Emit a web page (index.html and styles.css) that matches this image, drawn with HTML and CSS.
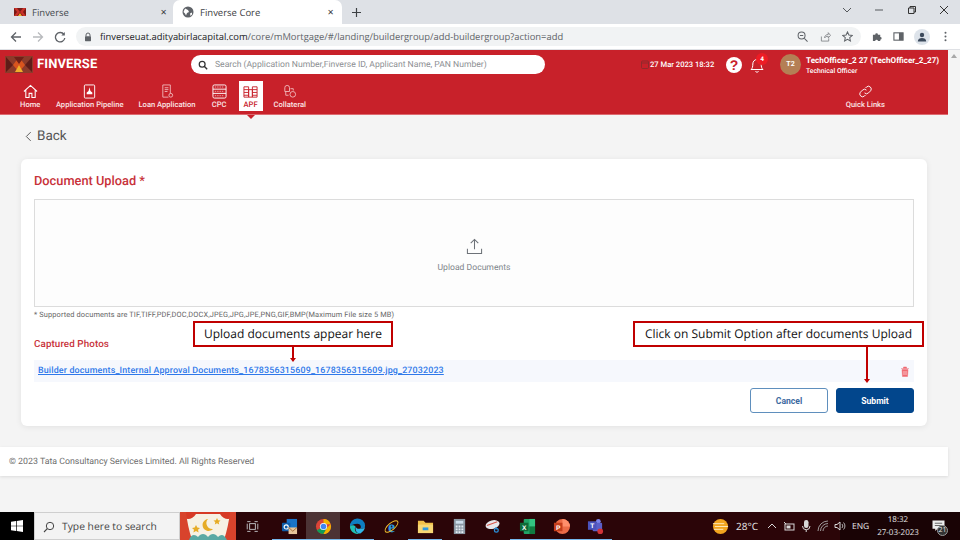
FILE: index.html
```html
<!DOCTYPE html>
<html lang="en">
<head>
  <meta charset="UTF-8" />
  <title>Finverse Core</title>
  <link rel="stylesheet" href="styles.css">
</head>
<body>
  <div class="tabstrip">
    <div class="tab">
      <svg class="tab-icon" viewBox="0 0 12 8"><rect width="12" height="8" fill="#c8322a"/><path d="M0 0l3 4-3 4zM12 0L9 4l3 4zM3 0l3 4 3-4zM3 8l3-4 3 4z" fill="#7a1a16"/><path d="M4 8l2-3 2 3z" fill="#f0b030"/></svg>
      <span class="tab-title">Finverse</span>
      <span class="tab-close">&#10005;</span>
    </div>
    <div class="tab tab-active">
      <svg class="tab-icon" viewBox="0 0 12 12"><circle cx="6" cy="6" r="5.5" fill="#5f6368"/><path d="M3 2.5l3 1.5 1 2-2 1-1 2.5-1-2-1.5-1.5zM8 7.5l2-1 0 2-1.5 1.5z" fill="#fff"/></svg>
      <span class="tab-title">Finverse Core</span>
      <span class="tab-close">&#10005;</span>
    </div>
    <svg class="new-tab" viewBox="0 0 10 10"><path d="M5 0v10M0 5h10" stroke="#3c4043" stroke-width="1.3"/></svg>
    <div class="window-btns">
      <svg viewBox="0 0 10 10"><path d="M1 3l4 4 4-4" fill="none" stroke="#55585c" stroke-width="1"/></svg>
      <svg viewBox="0 0 10 10"><path d="M1 5h8" stroke="#55585c" stroke-width="1"/></svg>
      <svg viewBox="0 0 10 10"><path d="M1.5 3h5.500v5.500h-5.500zM3 3V1.500h5.500V7H7" fill="none" stroke="#333" stroke-width="1"/></svg>
      <svg viewBox="0 0 10 10"><path d="M1 1l8 8M9 1l-8 8" stroke="#333" stroke-width="1"/></svg>
    </div>
  </div>

  <div class="toolbar">
    <svg class="nav-icon" viewBox="0 0 12 12"><path d="M11 6H2M6 1.500L1.500 6 6 10.500" fill="none" stroke="#5f6368" stroke-width="1.300"/></svg>
    <svg class="nav-icon" viewBox="0 0 12 12"><path d="M1 6h9M6 1.500L10.500 6 6 10.500" fill="none" stroke="#b8babd" stroke-width="1.300"/></svg>
    <svg class="nav-icon" viewBox="0 0 12 12"><path d="M10 3.500A4.700 4.700 0 1 0 10.800 7" fill="none" stroke="#5f6368" stroke-width="1.300"/><path d="M10.800 1v3.500H7.300z" fill="#5f6368"/></svg>
    <div class="omnibox">
      <svg class="lock" viewBox="0 0 8 10"><path d="M2 4.500V3a2 2 0 0 1 4 0v1.500" fill="none" stroke="#5f6368"/><rect x="1" y="4.200" width="6" height="5" rx=".6" fill="#5f6368"/></svg>
      <span class="url"><b>finverseuat.adityabirlacapital.com</b>/core/mMortgage/#/landing/buildergroup/add-buildergroup?action=add</span>
      <div class="omni-icons">
        <svg viewBox="0 0 12 12"><circle cx="5" cy="5" r="3.800" fill="none" stroke="#5f6368" stroke-width="1.100"/><path d="M8 8l3.500 3.500M3.200 5h3.600" stroke="#5f6368" stroke-width="1.100"/></svg>
        <svg viewBox="0 0 12 12"><path d="M1.500 6v5h8V8M5 7.500C5 5 7 3.800 9 3.800V1.800L11.500 4.800 9 7.500V5.800C7 5.800 6 6.300 5 7.500z" fill="none" stroke="#7d8084" stroke-width=".9"/></svg>
        <svg viewBox="0 0 12 12"><path d="M6 1l1.500 3.400 3.700.4-2.800 2.400.8 3.600L6 9 2.800 10.800l.8-3.600L.8 4.800l3.700-.4z" fill="none" stroke="#5f6368" stroke-width="1.100"/></svg>
      </div>
    </div>
    <div class="toolbar-icons">
      <svg viewBox="0 0 12 12"><path d="M1 4h2.500a1.500 1.500 0 0 1 3 0H9v2.500a1.500 1.500 0 0 1 0 3V11H6.500a1.500 1.500 0 0 0-3 0H1z" fill="#5f6368"/></svg>
      <svg viewBox="0 0 12 12"><rect x="1" y="2" width="10" height="8" fill="none" stroke="#5f6368" stroke-width="1.200"/><rect x="6.500" y="2" width="4.500" height="8" fill="#5f6368"/></svg>
      <span class="profile"><svg viewBox="0 0 12 12"><circle cx="6" cy="4" r="2.200" fill="#3c4a5c"/><path d="M1.800 10.500c0-2.500 2-3.500 4.200-3.500s4.200 1 4.200 3.500z" fill="#3c4a5c"/></svg></span>
      <svg viewBox="0 0 12 12"><circle cx="6" cy="2" r="1.100" fill="#5f6368"/><circle cx="6" cy="6" r="1.100" fill="#5f6368"/><circle cx="6" cy="10" r="1.100" fill="#5f6368"/></svg>
    </div>
  </div>

  <div class="viewport">
    <div class="app">
      <header class="app-header">
        <div class="header-top">
          <svg class="brand-logo" viewBox="0 0 28 17"><rect width="28" height="17" fill="#8c3a2a"/><path d="M1 1l7 8-7 7zM27 1l-7 8 7 7z" fill="#5e1c18"/><path d="M8 9l6-8 6 8-6 7z" fill="#d9541e"/><path d="M9 1h10l-5 7z" fill="#6f1f18"/><path d="M10 16l4-7 4 7z" fill="#f0ae2c"/></svg>
          <span class="brand-name">FINVERSE</span>
          <div class="search">
            <svg viewBox="0 0 12 12"><circle cx="5" cy="5" r="3.500" fill="none" stroke="#333" stroke-width="1.500"/><path d="M7.500 7.500L11 11" stroke="#333" stroke-width="1.700"/></svg>
            <span>Search (Application Number,Finverse ID, Applicant Name, PAN Number)</span>
          </div>
          <div class="header-right">
            <svg class="cal-icon" viewBox="0 0 8 9"><rect x=".5" y="1" width="7" height="7.500" rx="1" fill="none" stroke="#8f2a2c"/><path d="M.5 3h7" stroke="#8f2a2c"/></svg>
            <span class="header-date">27 Mar 2023 18:32</span>
            <span class="help-icon">?</span>
            <span class="bell">
              <svg viewBox="0 0 14 16"><path d="M1 12.500c1.500-1.200 1.800-3 1.800-5.500C2.800 4.500 4.500 2.500 7 2.500s4.200 2 4.200 4.500c0 2.500.3 4.300 1.800 5.500zM5.500 14.300a1.700 1.700 0 0 0 3 0" fill="none" stroke="#fff" stroke-width="1"/></svg>
              <span class="bell-count">4</span>
            </span>
            <span class="avatar">T2</span>
            <div class="user">
              <div class="user-name">TechOfficer_2 27 (TechOfficer_2_27)</div>
              <div class="user-role">Technical Officer</div>
            </div>
          </div>
        </div>
        <nav class="menu">
          <a class="menu-item menu-home">
            <svg viewBox="0 0 16 16"><path d="M1 8l7-6.500L15 8M3 6.500V14.500h3.500V10h3v4.500H13V6.500" fill="none" stroke="#fff" stroke-width="1.100"/></svg>
            Home
          </a>
          <a class="menu-item menu-pipeline">
            <svg viewBox="0 0 16 16"><rect x="2.500" y="1" width="11" height="14" rx="1" fill="none" stroke="#fff"/><path d="M8 3.500l1 4 2 1.500v2H5V9l2-1.500z" fill="#fff"/></svg>
            Application Pipeline
          </a>
          <a class="menu-item menu-loan">
            <svg viewBox="0 0 16 16"><path d="M3 1h8v9M3 1v13h6M5 4h4M5 6h4M5 8h3" fill="none" stroke="#f3c4c6" stroke-width=".9"/><circle cx="11.500" cy="12" r="2" fill="none" stroke="#f3c4c6" stroke-width=".9"/></svg>
            Loan Application
          </a>
          <a class="menu-item menu-cpc">
            <svg viewBox="0 0 16 16"><rect x="1" y="1" width="14" height="14" rx="1.500" fill="none" stroke="#fff"/><path d="M1 5.500h14M1 10h14" stroke="#fff"/><path d="M3 3.200h10M3 7.800h10M3 12.500h10" stroke="#fff" stroke-width=".6" stroke-dasharray="1.500 1"/></svg>
            CPC
          </a>
          <a class="menu-item menu-apf">
            <svg viewBox="0 0 16 16"><path d="M1 3h5v11H1zM10 3h5v11h-5zM6 6h4v8H6zM1 6h5M1 9h5M1 12h5M10 6h5M10 9h5M10 12h5" fill="none" stroke="#c8232c"/></svg>
            APF
          </a>
          <a class="menu-item menu-collateral">
            <svg viewBox="0 0 16 16"><path d="M3 4a2.500 2.500 0 0 1 5 0v4H3zM4 8v4h3" fill="none" stroke="#f3c4c6" stroke-width=".9"/><circle cx="11.500" cy="11" r="3" fill="none" stroke="#f3c4c6" stroke-width=".9"/><path d="M9 5h3v2" fill="none" stroke="#f3c4c6" stroke-width=".9"/></svg>
            Collateral
          </a>
          <a class="menu-item menu-quick">
            <svg viewBox="0 0 16 16"><path d="M7 9.500a3 3 0 0 0 4.200 0l2.300-2.300a3 3 0 0 0-4.200-4.200L8 4.300M9 6.500a3 3 0 0 0-4.200 0L2.500 8.800a3 3 0 0 0 4.200 4.200L8 11.700" fill="none" stroke="#fff" stroke-width="1"/></svg>
            Quick Links
          </a>
        </nav>
      </header>

      <div class="back">
        <svg viewBox="0 0 8 12"><path d="M6.500 1L1.500 6l5 5" fill="none" stroke="#555" stroke-width="1.100"/></svg>
        Back
      </div>

      <main class="card">
        <h2 class="card-title">Document Upload *</h2>
        <div class="dropzone">
          <svg viewBox="0 0 18 18"><path d="M9 12V1.500M5 5.500l4-4 4 4M1.500 11.500v5h15v-5" fill="none" stroke="#6d7278" stroke-width="1.100"/></svg>
          <span>Upload Documents</span>
        </div>
        <p class="note">* Supported documents are TIF,TIFF,PDF,DOC,DOCX,JPEG,JPG,JPE,PNG,GIF,BMP(Maximum File size 5 MB)</p>
        <h3 class="captured">Captured Photos</h3>
        <div class="doc-row">
          <a class="doc-link">Builder documents_Internal Approval Documents_1678356315609_1678356315609.jpg_27032023</a>
          <svg viewBox="0 0 10 11"><path d="M1 2.500h8M3.500 2.500V1h3v1.500M2 3.500h6l-.5 7h-5z" fill="#ef6a72" stroke="#ef6a72" stroke-width=".5"/><path d="M4 5v4M6 5v4" stroke="#fff" stroke-width=".6"/></svg>
        </div>
        <div class="actions">
          <button class="btn-cancel">Cancel</button>
          <button class="btn-submit">Submit</button>
        </div>
      </main>

      <footer class="page-footer">© 2023 Tata Consultancy Services Limited. All Rights Reserved</footer>

      <!-- callouts drawn over the screen -->
      <div class="callout callout-docs">Upload documents appear here</div>
      <div class="arrow arrow-docs"></div>
      <div class="callout callout-submit">Click on Submit Option after documents Upload</div>
      <div class="arrow arrow-submit"></div>
    </div>
    <div class="scrollbar"><span class="scroll-up"></span></div>
  </div>

  <div class="taskbar">
    <span class="start">
      <svg viewBox="0 0 12 12"><path d="M0 1.700L5 1v4.700H0zM5.700.9L12 0v5.700H5.700zM0 6.300h5V11L0 10.300zM5.700 6.300H12V12l-6.300-.9z" fill="#fff"/></svg>
    </span>
    <div class="task-search">
      <svg viewBox="0 0 12 12"><circle cx="7" cy="5" r="3.700" fill="none" stroke="#444"/><path d="M4.300 7.700L1 11" stroke="#444" stroke-width="1.100"/></svg>
      <span>Type here to search</span>
    </div>
    <svg class="search-art" viewBox="0 0 56 28" preserveAspectRatio="none">
      <rect width="56" height="28" fill="#f6f1e4"/>
      <path d="M0 0h56v3C50 9 44 8 40 2H16C12 8 6 9 0 3z" fill="#d63a26"/>
      <path d="M0 0h6c1 9 3 19 6 28H0zM56 0h-6c-1 9-3 19-6 28h12z" fill="#d8432c"/>
      <path d="M28 7a6 6 0 1 0 5 10 6 6 0 0 1-5-10z" fill="#e6ac25"/>
      <path d="M16 13l1.300 2.600 2.700.3-2 1.800.6 2.700-2.600-1.500-2.600 1.500.6-2.700-2-1.800 2.700-.3zM37 6l1.100 2.300 2.400.3-1.800 1.600.5 2.300-2.200-1.200-2.200 1.200.5-2.300-1.800-1.600 2.400-.3z" fill="#e6ac25"/>
      <path d="M9 28c2-6 6-6 9-3 3-4 7-4 10 0 3-4 7-4 10 0 3-3 6-3 9 3z" fill="#5aa9a4"/>
    </svg>
    <div class="task-apps">
      <span class="task-app task-view">
        <svg viewBox="0 0 16 16"><rect x="4.500" y="4.500" width="7" height="7" fill="none" stroke="#c9ccd0" stroke-width="1.100"/><path d="M1.500 2h4M10.500 2h4M1.500 14h4M10.500 14h4M1.500 4.500v7M14.500 4.500v7" fill="none" stroke="#c9ccd0" stroke-width="1.100"/></svg>
      </span>
      <span class="task-app task-app-run">
        <svg viewBox="0 0 18 18"><rect x="6" y="1" width="11" height="11" fill="#1a73c8"/><rect x="1" y="5" width="9" height="9" rx="1" fill="#0f5ca8"/><circle cx="5.500" cy="9.500" r="2.200" fill="none" stroke="#fff" stroke-width="1.200"/><path d="M8 10h9v7H8z" fill="#e8c59b"/><path d="M8 10l4.500 4L17 10" fill="none" stroke="#a06b3a"/></svg>
      </span>
      <span class="task-app task-app-run task-app-on">
        <svg viewBox="0 0 18 18"><circle cx="9" cy="9" r="8" fill="#db4437"/><path d="M9 9L2 13a8 8 0 0 0 7 4l4-7z" fill="#0f9d58"/><path d="M9 1a8 8 0 0 1 7.500 5.500H9z" fill="#f4b400"/><path d="M16.500 6.500A8 8 0 0 1 9 17l4-7z" fill="#f4b400"/><circle cx="9" cy="9" r="3.800" fill="#fff"/><circle cx="9" cy="9" r="3" fill="#4285f4"/></svg>
      </span>
      <span class="task-app task-app-run">
        <svg viewBox="0 0 18 18"><path d="M1 9a8 8 0 0 1 16-1c0 3-3 4-5 3 1.500-2 0-5-3-5-4 0-7 2-8 3z" fill="#0e7ec2"/><path d="M1 9c0 5 5 9 10 7.500C7 16 5 12 7 9 5 7 2 7.500 1 9z" fill="#1fc0b4"/><path d="M12 11c2 1 5 0 5-3 0 3-1 6-5 8.300-3 .7-6-3-5-7 1 2 3 2.700 5 1.700z" fill="#2fb6e8"/></svg>
      </span>
      <span class="task-app">
        <svg viewBox="0 0 18 18"><text class="ie-glyph" x="9" y="15" text-anchor="middle">e</text><ellipse cx="9" cy="9" rx="8.500" ry="3.500" transform="rotate(-40 9 9)" fill="none" stroke="#f0c030" stroke-width="1"/></svg>
      </span>
      <span class="task-app task-app-run">
        <svg viewBox="0 0 18 18"><path d="M1 3h6l2 2h8v11H1z" fill="#f0c04a"/><rect x="1" y="7" width="16" height="9" fill="#f7d774"/><rect x="6" y="10" width="6" height="3" fill="#2f9ae0"/></svg>
      </span>
      <span class="task-app">
        <svg viewBox="0 0 18 18"><rect x="3" y="1" width="12" height="16" fill="#8a97a3"/><rect x="5" y="3" width="8" height="3" fill="#cfe0ee"/><path d="M5 8h2v2H5zM8 8h2v2H8zM11 8h2v2h-2zM5 11h2v2H5zM8 11h2v2H8zM11 11h2v2h-2zM5 14h2v2H5zM8 14h2v2H8zM11 14h2v2h-2z" fill="#e6eef5"/></svg>
      </span>
      <span class="task-app">
        <svg viewBox="0 0 18 18"><ellipse cx="8" cy="7" rx="7.500" ry="4.500" transform="rotate(-15 8 7)" fill="#e6e6ea"/><path d="M2 8l11-4" stroke="#d8554a" stroke-width="1.200"/><circle cx="12" cy="13" r="2" fill="none" stroke="#2a8fd8" stroke-width="1.300"/><path d="M11 10l2 2" stroke="#2a8fd8" stroke-width="1.300"/></svg>
      </span>
      <span class="task-app task-app-run">
        <svg viewBox="0 0 18 18"><rect x="5" y="1" width="12" height="16" rx="1" fill="#21a366"/><path d="M11 1h6v8h-6z" fill="#33c481"/><path d="M11 9h6v8h-6z" fill="#107c41"/><rect x="1" y="5" width="9" height="9" fill="#0e6b38"/><text class="xl-glyph" x="5.500" y="12.500" text-anchor="middle">X</text></svg>
      </span>
      <span class="task-app task-app-run">
        <svg viewBox="0 0 18 18"><circle cx="10" cy="9" r="8" fill="#ed6c47"/><path d="M10 1a8 8 0 0 1 8 8h-8z" fill="#ff8f6b"/><rect x="1" y="5" width="9" height="9" fill="#c43e1c"/><text class="xl-glyph" x="5.500" y="12.500" text-anchor="middle">P</text></svg>
      </span>
      <span class="task-app task-app-run">
        <svg viewBox="0 0 18 18"><circle cx="12" cy="3.500" r="2.500" fill="#7b83eb"/><rect x="6" y="5" width="10" height="9" rx="1" fill="#5b5fc7"/><rect x="1" y="3.500" width="9" height="9" fill="#4b53bc"/><text class="xl-glyph" x="5.500" y="11" text-anchor="middle">T</text><circle cx="14" cy="14" r="3" fill="#d13438"/></svg>
      </span>
    </div>
    <div class="tray">
      <svg class="tray-sun" viewBox="0 0 18 18"><circle cx="9" cy="9" r="8" fill="#f2a51f"/><path d="M1 6h12M3 9h14M2 12h10" stroke="#fff3d0" stroke-width=".9"/></svg>
      <span class="tray-temp">28°C</span>
      <svg class="tray-icon" viewBox="0 0 12 12"><path d="M2 8l4-4 4 4" fill="none" stroke="#d8d8d8" stroke-width="1"/></svg>
      <svg class="tray-icon" viewBox="0 0 12 12"><rect x="2" y="4" width="9" height="6" fill="none" stroke="#d8d8d8"/><rect x="3.500" y="5.500" width="4" height="3" fill="#d8d8d8"/><path d="M1 2l2 2" stroke="#d8d8d8"/></svg>
      <svg class="tray-icon" viewBox="0 0 12 12"><rect x="4" y="0" width="4.500" height="8" rx="2.200" fill="#d8d8d8"/><path d="M2.500 6a3.700 3.700 0 0 0 7.500 0M6.200 10v2" fill="none" stroke="#d8d8d8"/></svg>
      <svg class="tray-icon" viewBox="0 0 12 12"><path d="M1 11a10 10 0 0 1 10-10M3.500 11A7.500 7.500 0 0 1 11 3.500M6 11a5 5 0 0 1 5-5" fill="none" stroke="#a8a8a8" stroke-width=".9"/></svg>
      <svg class="tray-icon tray-speaker" viewBox="0 0 12 12"><path d="M1 4.500h2L6 2v8L3 7.500H1z" fill="none" stroke="#d8d8d8"/><path d="M8 4a3 3 0 0 1 0 4M9.500 2.500a5 5 0 0 1 0 7" fill="none" stroke="#d8d8d8" stroke-width=".8"/></svg>
      <div class="tray-dark">
        <span class="tray-lang">ENG</span>
        <div class="tray-clock"><span>18:32</span><span>27-03-2023</span></div>
        <span class="tray-notes">
          <svg viewBox="0 0 14 13"><path d="M.5.5h13v9H6L3.500 12V9.500H.5z" fill="#eee"/><path d="M3 3.500h8M3 6h8" stroke="#333" stroke-width=".8"/></svg>
          <span class="tray-count">21</span>
        </span>
      </div>
    </div>
  </div>
</body>
</html>
```

FILE: styles.css
```css
* {
  box-sizing: border-box;
}
html, body {
  margin: 0;
  height: 540px;
  overflow: hidden;
}
body {
  width: 960px;
  display: flex;
  flex-direction: column;
  font-family: Roboto, "Liberation Sans", sans-serif;
  text-rendering: geometricPrecision;
  background: #fff;
}
svg {
  display: block;
  flex: none;
}

/* browser chrome */
.tabstrip {
  height: 24px;
  flex: none;
  display: flex;
  align-items: flex-end;
  background: #dee1e6;
}
.tab {
  width: 173px;
  height: 24px;
  display: flex;
  align-items: center;
  padding: 0 4px 0 14px;
  font: 9.5px "Open Sans", sans-serif;
  color: #45494e;
}
.tab-active {
  width: 169px;
  padding: 0 6px 0 9px;
  background: #fff;
  border-radius: 7px 7px 0 0;
  color: #3c4043;
}
.tab-icon {
  width: 12px;
  height: 12px;
  margin-right: 6px;
}
.tab-title {
  flex: 1;
}
.tab-close {
  font-size: 8px;
  color: #3c4043;
  margin-right: 2px;
}
.new-tab {
  width: 9px;
  height: 9px;
  margin: 0 0 7px 10px;
}
.window-btns {
  margin-left: auto;
  display: flex;
  gap: 22.5px;
  padding: 0 11px 9px 0;
}
.window-btns svg {
  width: 10px;
  height: 10px;
}
.toolbar {
  height: 26px;
  flex: none;
  display: flex;
  align-items: center;
  padding-left: 10px;
  background: #fff;
  border-bottom: 1px solid #dfe1e5;
}
.nav-icon {
  width: 12px;
  height: 12px;
  margin-right: 10px;
}
.omnibox {
  width: 785px;
  height: 19px;
  display: flex;
  align-items: center;
  padding: 0 8px 0 8px;
  background: #f1f3f4;
  border-radius: 10px;
}
.lock {
  width: 8px;
  height: 10px;
  margin-right: 8px;
}
.url {
  font: 9.400px "Open Sans", sans-serif;
  color: #5f6368;
  white-space: nowrap;
}
.url b {
  font-weight: 400;
  color: #202124;
}
.omni-icons {
  margin-left: auto;
  display: flex;
  gap: 11.5px;
}
.omni-icons svg {
  width: 11px;
  height: 11px;
}
.toolbar-icons {
  display: flex;
  align-items: center;
  gap: 10px;
  margin-left: 10.500px;
}
.toolbar-icons > svg {
  width: 11px;
  height: 11px;
}
.profile {
  width: 16px;
  height: 16px;
  padding: 2px;
  border-radius: 50%;
  background: #dde3ea;
}

/* app */
.viewport {
  flex: 1;
  display: flex;
  min-height: 0;
  background: #f4f4f4;
}
.app {
  position: relative;
  width: 948px;
  display: flex;
  flex-direction: column;
}
.scrollbar {
  width: 12px;
  background: #f4f4f4;
  padding: 4px 0 0 3px;
}
.scroll-up {
  display: block;
  width: 0;
  height: 0;
  border: 3px solid transparent;
  border-top: 0;
  border-bottom: 4px solid #a8a8a8;
}
.app-header {
  height: 65px;
  flex: none;
  background: #c8212a;
  border-bottom: 1px solid #dd6a70;
  color: #fff;
}
.header-top {
  height: 29px;
  display: flex;
  align-items: center;
  padding: 0 9px 0 5px;
}
.brand-logo {
  width: 28px;
  height: 17px;
  margin-right: 4px;
}
.brand-name {
  width: 92px;
  font-size: 13px;
  font-weight: 700;
  letter-spacing: .1px;
}
.search {
  width: 354px;
  height: 19px;
  margin-left: 62px;
  display: flex;
  align-items: center;
  gap: 7px;
  padding-left: 7px;
  background: #fff;
  border-radius: 10px;
  font-size: 8.600px;
  color: #8d8f93;
  white-space: nowrap;
}
.search svg {
  width: 10px;
  height: 10px;
}
.header-right {
  margin-left: auto;
  display: flex;
  align-items: center;
}
.cal-icon {
  width: 8px;
  height: 9px;
  margin-right: 1px;
}
.header-date {
  width: 76px;
  font-size: 7.600px;
  font-weight: 500;
}
.help-icon {
  width: 16px;
  height: 16px;
  margin-right: 8px;
  border-radius: 50%;
  background: #fff;
  color: #c8212a;
  font: 700 14px/16px "Liberation Sans", sans-serif;
  text-align: center;
}
.bell {
  position: relative;
  width: 14px;
  height: 16px;
  margin-right: 16px;
}
.bell svg {
  width: 14px;
  height: 16px;
}
.bell-count {
  position: absolute;
  top: -4px;
  left: 6px;
  width: 12px;
  height: 12px;
  border-radius: 50%;
  background: #ee1c25;
  font-size: 6.500px;
  font-weight: 700;
  line-height: 12px;
  text-align: center;
}
.avatar {
  width: 21px;
  height: 21px;
  margin-right: 5px;
  border-radius: 50%;
  background: #b47f55;
  font-size: 7px;
  font-weight: 700;
  line-height: 21px;
  text-align: center;
}
.user {
  width: 133px;
  white-space: nowrap;
}
.user-name {
  font-size: 8.100px;
  font-weight: 700;
}
.user-role {
  margin-top: 2px;
  font-size: 6.800px;
  font-weight: 500;
}
.menu {
  height: 35px;
  display: flex;
  align-items: flex-end;
}
.menu-item {
  position: relative;
  height: 30px;
  margin-bottom: 3px;
  display: flex;
  flex-direction: column;
  align-items: center;
  justify-content: space-between;
  padding: 3px 0 2px;
  font-size: 7.600px;
  font-weight: 500;
  color: #fbe3e4;
  white-space: nowrap;
}
.menu-item svg {
  width: 15px;
  height: 15px;
}
.menu-home {
  margin-left: 20px;
}
.menu-pipeline {
  margin-left: 15.500px;
}
.menu-loan {
  margin-left: 15px;
}
.menu-cpc {
  margin-left: 16px;
}
.menu-apf {
  width: 24px;
  margin-left: 12px;
  background: #fff;
  color: #c8212a;
}
.menu-apf::after {
  content: "";
  position: absolute;
  left: 8px;
  bottom: -8px;
  border: 4px solid transparent;
  border-top: 4px solid #c8212a;
  border-bottom: 0;
}
.menu-collateral {
  margin-left: 11px;
}
.menu-quick {
  margin-left: auto;
  margin-right: 63px;
}

.back {
  height: 44px;
  flex: none;
  display: flex;
  align-items: center;
  gap: 5px;
  padding: 0 0 2px 25px;
  font-size: 13.500px;
  color: #555;
}
.back svg {
  width: 7px;
  height: 11px;
}
.card {
  height: 267px;
  flex: none;
  margin: 0 21px;
  padding: 15px 13px 0;
  background: #fff;
  border-radius: 6px;
  box-shadow: 0 1px 6px rgba(0, 0, 0, .08);
}
.card-title {
  margin: 0 0 10px;
  height: 15px;
  font-size: 12.800px;
  line-height: 15px;
  font-weight: 500;
  color: #c8323a;
}
.dropzone {
  height: 108px;
  display: flex;
  flex-direction: column;
  align-items: center;
  padding-top: 38px;
  gap: 8px;
  background: #fdfdfd;
  border: 1px solid #dcdcdc;
  font-size: 8.600px;
  color: #80858b;
}
.dropzone svg {
  width: 17px;
  height: 17px;
}
.note {
  margin: 3px 0 0;
  height: 9px;
  font-size: 7.400px;
  line-height: 9px;
  letter-spacing: .13px;
  color: #666;
}
.captured {
  margin: 20px 0 0;
  height: 11px;
  font-size: 9.800px;
  line-height: 11px;
  font-weight: 500;
  letter-spacing: .1px;
  color: #c8323a;
}
.doc-row {
  height: 22px;
  margin-top: 10px;
  display: flex;
  align-items: center;
  justify-content: space-between;
  padding: 0 4px 0 4px;
  background: #f6f8fd;
}
.doc-row svg {
  width: 10px;
  height: 11px;
}
.doc-link {
  font-size: 8.900px;
  font-weight: 500;
  letter-spacing: .16px;
  color: #2f78ea;
  text-decoration: underline;
}
.actions {
  margin-top: 6px;
  display: flex;
  justify-content: flex-end;
  gap: 8px;
}
.actions button {
  width: 78px;
  height: 25px;
  border-radius: 3px;
  font-family: inherit;
  font-size: 8.600px;
  font-weight: 700;
}
.btn-cancel {
  background: #fff;
  border: 1px solid #5f8fbd;
  color: #3d6a9f;
}
.btn-submit {
  background: #02468c;
  border: 1px solid #02468c;
  color: #fff;
}
.page-footer {
  height: 29px;
  flex: none;
  margin-top: 21px;
  display: flex;
  align-items: center;
  padding: 1px 0 0 9px;
  background: #fff;
  box-shadow: 0 1px 3px rgba(0, 0, 0, .1);
  font-size: 8.800px;
  color: #6e6e6e;
}

/* callouts */
.callout {
  position: absolute;
  height: 26px;
  display: flex;
  align-items: center;
  justify-content: center;
  padding-bottom: 2px;
  background: #fff;
  border: 2px solid #c00000;
  font: 12px "Open Sans", sans-serif;
  color: #111;
  white-space: nowrap;
}
.callout-docs {
  left: 193px;
  top: 271px;
  width: 200px;
}
.callout-submit {
  left: 633px;
  top: 271px;
  width: 291px;
}
.arrow {
  position: absolute;
  width: 2px;
  background: #c00000;
}
.arrow::after {
  content: "";
  position: absolute;
  left: -2px;
  bottom: -3px;
  border: 3px solid transparent;
  border-top: 4px solid #c00000;
  border-bottom: 0;
}
.arrow-docs {
  left: 292px;
  top: 297px;
  height: 12px;
}
.arrow-submit {
  left: 866px;
  top: 297px;
  height: 33px;
}

/* taskbar */
.taskbar {
  height: 28px;
  flex: none;
  display: flex;
  align-items: center;
  background: #2b0508;
  color: #e6e6e6;
  font: 8px "Open Sans", sans-serif;
}
.start {
  width: 34px;
  height: 28px;
  display: flex;
  align-items: center;
  justify-content: center;
  background: #000;
}
.start svg {
  width: 12px;
  height: 12px;
}
.task-search {
  width: 146px;
  height: 28px;
  display: flex;
  align-items: center;
  gap: 7px;
  padding: 1px 0 0 8px;
  background: #f3f3f3;
  border: 1px solid #cfcfcf;
  font-size: 10.300px;
  color: #444;
}
.task-search svg {
  width: 12px;
  height: 12px;
}
.search-art {
  width: 56px;
  height: 28px;
}
.task-apps {
  display: flex;
}
.task-app {
  width: 34px;
  height: 28px;
  display: flex;
  align-items: center;
  justify-content: center;
}
.task-view {
  width: 36px;
  padding-right: 3px;
}
.task-app svg {
  width: 17px;
  height: 17px;
}
.task-view svg {
  width: 13px;
  height: 13px;
}
.task-app-run {
  box-shadow: inset 0 -1px 0 #76b9ed;
}
.task-app-on {
  background: #4c3335;
}
.ie-glyph {
  font: 700 17px "Liberation Serif", serif;
  fill: #2a9be0;
}
.xl-glyph {
  font: 700 7px "Liberation Sans", sans-serif;
  fill: #fff;
}
.tray {
  flex: 1;
  height: 28px;
  display: flex;
  align-items: center;
  padding-left: 100px;
}
.tray-sun {
  width: 17px;
  height: 17px;
  margin-right: 7px;
}
.tray-temp {
  width: 30px;
  font-size: 10px;
}
.tray-icon {
  width: 12px;
  height: 12px;
  margin-right: 5px;
}
.tray-speaker {
  position: relative;
  z-index: 1;
  margin-right: -6px;
}
.tray-dark {
  flex: 1;
  height: 28px;
  display: flex;
  align-items: center;
  padding-left: 12px;
  background: #190305;
}
.tray-lang {
  width: 23px;
  font-size: 8.500px;
}
.tray-clock {
  width: 46px;
  display: flex;
  flex-direction: column;
  align-items: center;
  gap: 2px;
  line-height: 11px;
}
.tray-notes {
  position: relative;
  margin-left: 11px;
}
.tray-notes svg {
  width: 13px;
  height: 12px;
}
.tray-count {
  position: absolute;
  top: 5px;
  left: 5px;
  width: 11px;
  height: 11px;
  border-radius: 50%;
  background: #333;
  border: 1px solid #999;
  font-size: 7px;
  line-height: 9px;
  text-align: center;
}
```
